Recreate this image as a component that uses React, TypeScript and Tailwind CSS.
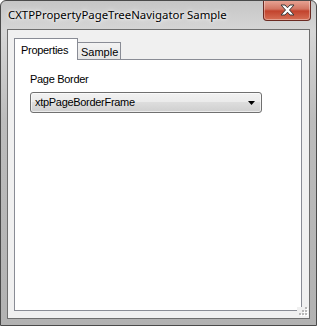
import React from "react";

export default function App() {
  return (
    <div
      className="relative w-[317px] h-[326px] overflow-hidden rounded-t-[6px] border border-[#4a4a4a] bg-[linear-gradient(to_bottom,#c6c6c6,#d6d6d6_30px,#bcbcbc_120px,#b2b2b2)]"
      style={{ fontFamily: '"Liberation Sans", Arial, sans-serif' }}
    >
      {/* title bar */}
      <div className="relative h-[28px] flex items-center pl-[7px]">
        <span
          className="text-[11.4px] text-black [text-shadow:0_0_6px_#ffffff,0_0_3px_#ffffff]"
          style={{ fontFamily: '"Noto Sans", "Open Sans", sans-serif' }}
        >
          CXTPPropertyPageTreeNavigator Sample
        </span>
        <div className="absolute left-[262px] top-[-1px] w-[48px] h-[21px] rounded-b-[4px] border border-[#6b2a22] border-t-0 bg-[linear-gradient(to_bottom,#e9a899,#d27562_45%,#c2432d_55%,#d66f55)] flex items-center justify-center shadow-[inset_0_0_0_1px_rgba(255,255,255,0.35)]">
          <svg width="15" height="12" viewBox="0 0 15 12">
            <path
              d="M1 1 H5 L7.5 3.8 L10 1 H14 L9.5 6 L14 11 H10 L7.5 8.2 L5 11 H1 L5.5 6 Z"
              fill="#ffffff"
              stroke="#3a3a3a"
              strokeWidth="1"
              strokeLinejoin="round"
            />
          </svg>
        </div>
      </div>
      {/* client area */}
      <div className="mx-[6px] h-[290px] border border-[#6e6e6e] bg-[#f0f0f0] pt-[7px] pl-[6px] pr-[7px] pb-[7px] flex flex-col relative">
        <div className="flex items-end h-[22px] text-[11px] tracking-[-0.3px] text-black">
          <div className="relative z-10 -mb-px h-[22px] w-[64px] border border-b-0 border-[#898c95] bg-white pl-[6px] pt-[3px]">
            Properties
          </div>
          <div className="h-[17px] w-[43px] border-t border-r border-[#898c95] bg-[linear-gradient(to_bottom,#f3f3f3,#e5e5e5)] pl-[3px] pt-[1px] tracking-[0px]">
            Sample
          </div>
        </div>
        <div className="flex-1 border border-[#898c95] bg-white pl-[15px] pt-[13px] text-[11px] tracking-[-0.3px] text-black">
          <div className="leading-[13px]">Page Border</div>
          <div className="mt-[6px] w-[232px] h-[21px] rounded-[3px] border border-[#707070] bg-[linear-gradient(to_bottom,#f2f2f2,#ebebeb_45%,#dddddd_50%,#cfcfcf)] flex items-center justify-between pl-[4px] pr-[6px] shadow-[inset_0_0_0_1px_rgba(255,255,255,0.6)]">
            <span>xtpPageBorderFrame</span>
            <svg width="7" height="4" viewBox="0 0 7 4">
              <path d="M0 0 H7 L3.5 4 Z" fill="#000" />
            </svg>
          </div>
        </div>
        {/* size grip */}
        <div className="absolute right-0 bottom-0 w-[12px] h-[11px] bg-[#f0f0f0]">
          <svg width="12" height="11" viewBox="0 0 12 11" className="absolute right-[1px] bottom-[1px]">
            {[
              [9, 1],
              [6, 4],
              [9, 4],
              [3, 7],
              [6, 7],
              [9, 7],
            ].map(([x, y], i) => (
              <g key={i}>
                <rect x={x + 1} y={y + 1} width="2" height="2" fill="#ffffff" />
                <rect x={x} y={y} width="2" height="2" fill="#b8b8b8" />
              </g>
            ))}
          </svg>
        </div>
      </div>
    </div>
  );
}
